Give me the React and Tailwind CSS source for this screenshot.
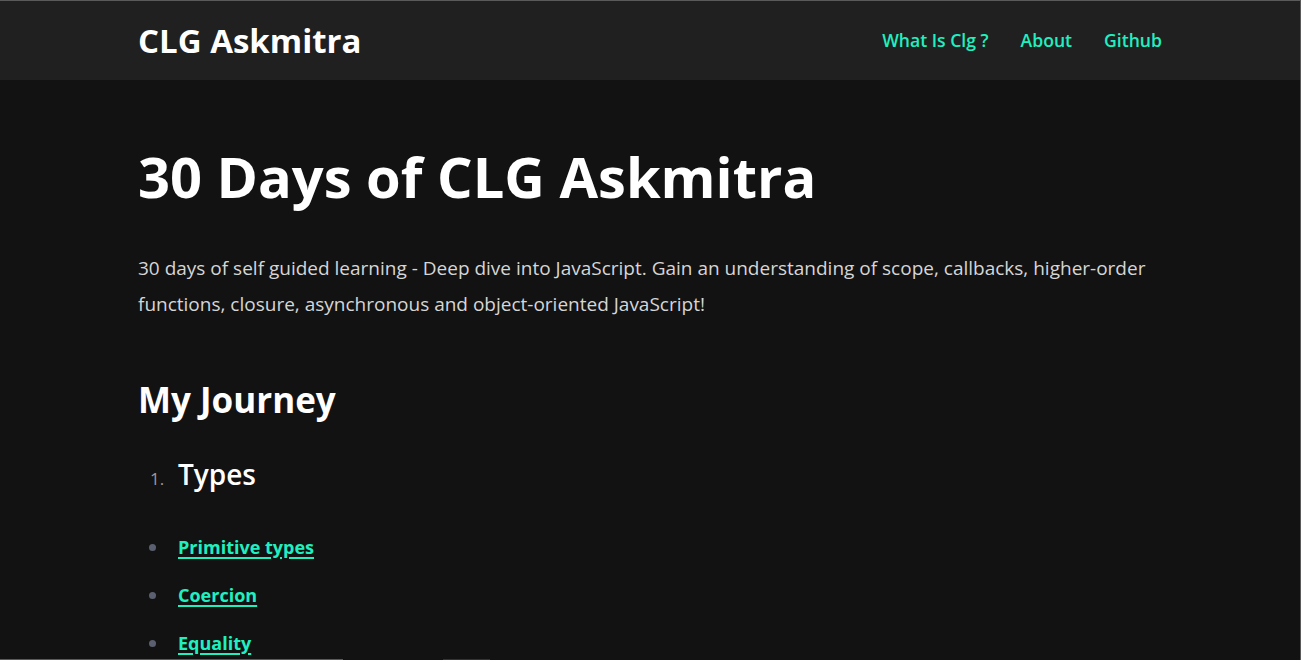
const NAV = ["What Is Clg ?", "About", "Github"];
const TOPICS = ["Primitive types", "Coercion", "Equality"];

export default function App() {
  return (
    <div
      className="relative h-[660px] overflow-hidden border-t border-r border-[#5a5a5a] bg-[#121212] text-white"
      style={{ fontFamily: '"Open Sans", "Noto Sans", sans-serif' }}
    >
      {/* Header */}
      <header className="h-[79px] bg-[#202020]">
        <div className="mx-auto flex h-full max-w-[1024px] items-center justify-between">
          <h2 className="text-[33px] font-bold leading-[80px]">CLG Askmitra</h2>
          <nav className="flex items-center gap-8">
            {NAV.map((item) => (
              <a key={item} href="#" className="text-[17.6px] font-semibold text-[#20f0c0]">
                {item}
              </a>
            ))}
          </nav>
        </div>
      </header>

      {/* Content */}
      <main className="mx-auto max-w-[1024px] pt-[58px]">
        <h1 className="text-[56px] font-bold leading-[76px]">30 Days of CLG Askmitra</h1>
        <p className="mt-[36px] text-[19px] leading-[36px] text-[#d6d6d6]">
          30 days of self guided learning - Deep dive into JavaScript. Gain an understanding of scope, callbacks,
          higher-order functions, closure, asynchronous and object-oriented JavaScript!
        </p>

        <h2 className="mt-[53px] text-[35px] font-bold leading-[50px]">My Journey</h2>

        <ol className="mt-[29px]">
          <li className="flex items-baseline">
            <span className="w-10 pl-3 text-[17px] text-[#9a9a9a]">1.</span>
            <h3 className="text-[28px] font-semibold leading-[40px]">Types</h3>
          </li>
        </ol>

        <ul className="mt-[36px] flex flex-col gap-[14px]">
          {TOPICS.map((t) => (
            <li key={t} className="flex h-[34px] items-center">
              <span className="w-10 pl-[11px]">
                <span className="block h-[7px] w-[7px] rounded-full bg-[#5b6070]" />
              </span>
              <a
                href="#"
                className="text-[18px] font-bold text-[#20f0c0] underline decoration-2 underline-offset-[3px]"
              >
                {t}
              </a>
            </li>
          ))}
        </ul>
      </main>

      {/* scrollbar remnant */}
      <div className="absolute bottom-0 left-0 flex h-px w-full">
        <div className="w-[343px] bg-[#5a5a5a]" />
        <div className="w-[100px]" />
        <div className="w-[47px] bg-[#333]" />
      </div>
    </div>
  );
}
